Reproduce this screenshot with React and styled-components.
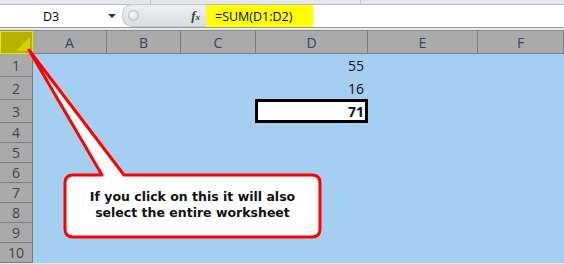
import React from "react";
import styled, { createGlobalStyle } from "styled-components";

const GlobalStyle = createGlobalStyle`
  html, body { margin: 0; padding: 0; background: #ffffff; }
  body { font-family: "Liberation Sans", Arial, sans-serif; }
`;

const Window = styled.div`
  position: relative;
  width: 564px;
  height: 264px;
  overflow: hidden;
  background: #e8eaee;
`;

const TopStrip = styled.div`
  height: 5px;
  background: #e4e7ec;
  border-bottom: 1px solid #b8bcc4;
  box-sizing: border-box;
  display: flex;
`;

const StripDivider = styled.div`
  width: ${(p) => p.$w}px;
  border-right: 1px solid #c4c8ce;
  box-sizing: border-box;
`;

const FormulaBar = styled.div`
  display: flex;
  height: 22px;
  background: #ffffff;
  border-bottom: 1px solid #9c9ea2;
`;

const NameBox = styled.div`
  width: 122px;
  display: flex;
  align-items: center;
  position: relative;
  font-family: "Open Sans", "Liberation Sans", sans-serif;
  font-size: 12.5px;
  color: #000;
  span { margin-left: 43px; }
`;

const DropArrow = styled.div`
  position: absolute;
  right: 6px;
  top: 9px;
  width: 0;
  height: 0;
  border-left: 4px solid transparent;
  border-right: 4px solid transparent;
  border-top: 4px solid #333;
`;

const Splitter = styled.div`
  width: 84px;
  display: flex;
  align-items: center;
  background: linear-gradient(#eef0f3, #d9dce2);
  border-radius: 10px 0 0 10px;
  border: 1px solid #c3c7ce;
  border-right: none;
  box-sizing: border-box;
  margin-top: -1px;
`;

const Knob = styled.div`
  width: 9px;
  height: 9px;
  margin-left: 5px;
  border-radius: 50%;
  background: radial-gradient(circle at 40% 35%, #ffffff, #c7cad0);
  border: 1px solid #b9bdc4;
`;

const Fx = styled.div`
  margin-left: auto;
  margin-right: 6px;
  font-family: "Liberation Serif", serif;
  font-style: italic;
  font-weight: bold;
  font-size: 13px;
  color: #3a3a3a;
  sub { font-size: 9px; vertical-align: 0; }
`;

const FormulaText = styled.div`
  width: 107px;
  background: #ffff00;
  display: flex;
  align-items: center;
  padding-left: 9px;
  box-sizing: border-box;
  font-family: "Open Sans", "Liberation Sans", sans-serif;
  font-size: 12.5px;
  color: #000;
`;

const Gap = styled.div`
  height: 2px;
  background: #e6e8ec;
`;

const Sheet = styled.div`
  display: grid;
  grid-template-columns: 33px 74px 74px 75px 112px 110px 1fr;
  grid-template-rows: 23px repeat(3, 23px) repeat(7, 20px);
  background: #a5cff0;
  border-top: 1px solid #8a8a8a;
`;

const Corner = styled.div`
  position: relative;
  background: #b3b300;
  border: 1px solid #e6e600;
  box-sizing: border-box;
  &::after {
    content: "";
    position: absolute;
    right: 2px;
    bottom: 2px;
    width: 0;
    height: 0;
    border-left: 14px solid transparent;
    border-bottom: 14px solid #d2d200;
  }
`;

const ColHead = styled.div`
  background: #aaaaaa;
  border-right: 1px solid #7c7c7c;
  border-bottom: 1px solid #7c7c7c;
  display: flex;
  align-items: center;
  justify-content: center;
  font-family: "Open Sans", "Liberation Sans", sans-serif;
  font-size: 14px;
  color: #36465a;
`;

const RowHead = styled(ColHead)`
  font-size: 14px;
`;

const Cell = styled.div`
  display: flex;
  align-items: center;
  justify-content: flex-end;
  padding-right: 4px;
  font-family: "Open Sans", "Liberation Sans", sans-serif;
  font-size: 14px;
  color: #111;
  ${(p) =>
    p.$selected &&
    `
    background: #ffffff;
    border: 3px solid #000;
    margin: -1px 0 0 -1px;
    padding-right: 1px;
    font-weight: bold;
  `}
`;

const Overlay = styled.div`
  position: absolute;
  inset: 0;
  pointer-events: none;
`;

const CalloutText = styled.div`
  position: absolute;
  left: 65px;
  top: 189px;
  width: 255px;
  text-align: center;
  font-family: "DejaVu Sans", Verdana, sans-serif;
  font-weight: bold;
  font-size: 12.5px;
  line-height: 16px;
  color: #111;
`;

const columns = ["A", "B", "C", "D", "E", "F"];
const values = { 1: "55", 2: "16", 3: "71" };

export default function App() {
  return (
    <Window>
      <GlobalStyle />
      <TopStrip>
        <StripDivider $w={151} />
        <StripDivider $w={210} />
      </TopStrip>
      <FormulaBar>
        <NameBox>
          <span>D3</span>
          <DropArrow />
        </NameBox>
        <Splitter>
          <Knob />
          <Fx>
            f<sub>x</sub>
          </Fx>
        </Splitter>
        <FormulaText>=SUM(D1:D2)</FormulaText>
      </FormulaBar>
      <Gap />
      <Sheet>
        <Corner />
        {columns.map((c) => (
          <ColHead key={c}>{c}</ColHead>
        ))}
        {Array.from({ length: 10 }, (_, i) => i + 1).map((r) => (
          <React.Fragment key={r}>
            <RowHead>{r}</RowHead>
            {columns.map((c) => (
              <Cell key={c} $selected={c === "D" && r === 3}>
                {c === "D" ? values[r] : ""}
              </Cell>
            ))}
          </React.Fragment>
        ))}
      </Sheet>
      <Overlay>
        <svg width="564" height="264" viewBox="0 0 564 264">
          <path
            d="M73 175 L102 175 L29 50 L124 175 L312 175 Q320 175 320 183 L320 229 Q320 237 312 237 L73 237 Q65 237 65 229 L65 183 Q65 175 73 175 Z"
            fill="#ffffff"
            stroke="#ff0000"
            strokeWidth="3"
            strokeLinejoin="round"
          />
        </svg>
        <CalloutText>
          If you click on this it will also
          <br />
          select the entire worksheet
        </CalloutText>
      </Overlay>
    </Window>
  );
}
